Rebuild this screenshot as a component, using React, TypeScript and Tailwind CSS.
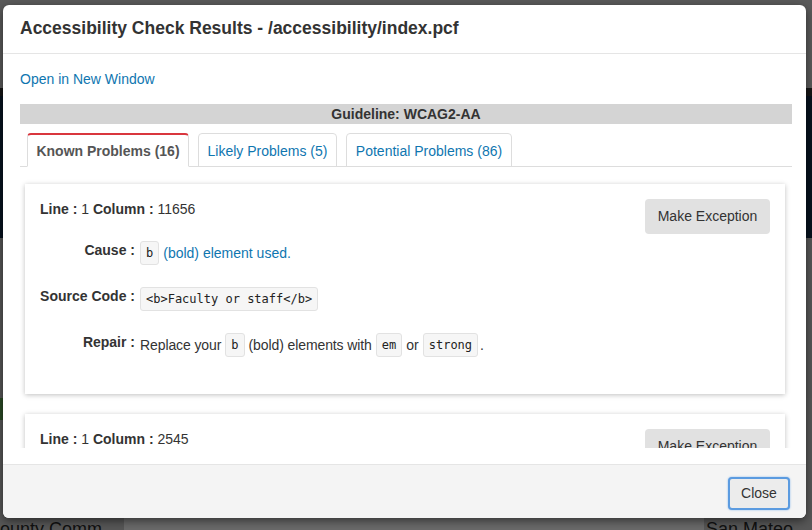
import React from 'react';

const sans = 'font-["Liberation_Sans",Arial,sans-serif]';
const mono = 'font-["DejaVu_Sans_Mono",monospace]';

const Code: React.FC<{ children: React.ReactNode }> = ({ children }) => (
  <code className={`${mono} inline-block text-[12px] leading-[22px] text-[#222] bg-[#f6f6f6] border border-[#e2e2e2] rounded-[3px] px-[5px]`}>
    {children}
  </code>
);

interface RowProps {
  label: string;
  children: React.ReactNode;
}

const Row: React.FC<RowProps> = ({ label, children }) => (
  <div className="flex items-center mt-[22px] min-h-[24px]">
    <span className="w-[95px] text-right font-bold text-[#333] mr-[5px] -mt-[5px]">{label}</span>
    <div className="flex items-center gap-[4px] text-[#333]">{children}</div>
  </div>
);

interface IssueProps {
  line: number;
  column: number;
}

const Issue: React.FC<IssueProps> = ({ line, column }) => (
  <div className="bg-white ml-[5px] mr-[7px] shadow-[0_1px_5px_rgba(0,0,0,0.25)] flex justify-between px-[15px] pt-[15px] pb-[37px]">
    <div>
      <div className="h-[20px] leading-[20px] text-[#333]">
        <b>Line : </b>{line} <b>Column : </b>{column}
      </div>
      <Row label="Cause :">
        <Code>b</Code>
        <span className="text-[#0f76b0]">(bold) element used.</span>
      </Row>
      <Row label="Source Code :">
        <Code>&lt;b&gt;Faculty or staff&lt;/b&gt;</Code>
      </Row>
      <Row label="Repair :">
        <span className="tracking-[-0.1px]">Replace your</span>
        <Code>b</Code>
        <span className="tracking-[-0.1px]">(bold) elements with</span>
        <Code>em</Code>
        <span>or</span>
        <Code>strong</Code>
        <span className="-ml-[2px]">.</span>
      </Row>
    </div>
    <button className="h-[35px] w-[125px] bg-[#e1e1e1] rounded-[4px] text-[#333] text-[14px]">
      Make Exception
    </button>
  </div>
);

const tabs = [
  { label: 'Known Problems (16)', w: 'w-[162px]', active: true },
  { label: 'Likely Problems (5)', w: 'w-[139px]', active: false },
  { label: 'Potential Problems (86)', w: 'w-[166px]', active: false },
];

export default function App() {
  return (
    <div className={`${sans} relative w-[812px] h-[530px] overflow-hidden bg-[#585858] text-[14px]`}>
      {/* dimmed page behind the dialog */}
      <div className="flex flex-col h-full">
        <div className="h-[88px] bg-[#5a5a5a]" />
        <div className="h-[8px] bg-[#161616]" />
        <div className="h-[142px] bg-[#07121e]" />
        <div className="h-[160px] bg-[#575757]" />
        <div className="h-[22px] w-[120px] bg-[#2b4a25]" />
        <div className="flex-1 bg-[#575757]" />
        <div className="h-[12px] flex text-[18px] leading-[22px] text-[#111] overflow-hidden">
          <span className="w-[124px] bg-[#575757]">ounty Comm</span>
          <span className="w-[580px] bg-[#6a6a6a]" />
          <span className="flex-1 bg-[#575757] pl-[2px]">San Mateo</span>
        </div>
      </div>

      {/* dialog */}
      <div className="absolute left-[3px] top-[5px] w-[803px] h-[513px] bg-white rounded-[6px] shadow-[0_3px_10px_rgba(0,0,0,0.5)] flex flex-col overflow-hidden">
        <div className="h-[49px] border-b border-[#e5e5e5] px-[17px] flex items-center">
          <h1 className="text-[17.5px] font-bold text-[#333] mt-[-1px]">
            Accessibility Check Results - /accessibility/index.pcf
          </h1>
        </div>

        <div className="flex-1 pl-[17px] pr-[14px] pt-[15px] pb-[15px] flex flex-col min-h-0">
          <a className="h-[20px] leading-[20px] text-[#0f76b0]">Open in New Window</a>
          <div className="mt-[15px] h-[20px] leading-[20px] bg-[#d4d4d4] text-center font-bold text-[#333]">
            Guideline: WCAG2-AA
          </div>
          <div className="mt-[9px] flex gap-[9px] pl-[7px] border-b border-[#dddddd]">
            {tabs.map((t) => (
              <div
                key={t.label}
                className={`${t.w} h-[34px] -mb-px flex items-center justify-center pt-[2px] rounded-t-[4px] border ${
                  t.active
                    ? 'border-[#ddd] border-b-white border-t-2 border-t-[#d9363e] font-bold text-[#555] bg-white'
                    : 'border-[#ddd] text-[#0f76b0]'
                }`}
              >
                {t.label}
              </div>
            ))}
          </div>
          <div className="h-[281px] overflow-hidden pt-[17px] flex flex-col gap-[20px]">
            <Issue line={1} column={11656} />
            <Issue line={1} column={2545} />
          </div>
        </div>

        <div className="h-[54px] border-t border-[#e5e5e5] bg-[#f4f4f4] flex items-center justify-end pr-[16px]">
          <button className="w-[62px] h-[33px] rounded-[4px] bg-[#ececec] border-2 border-[#5b9be0] shadow-[0_0_2px_#7fb2ea] text-[#333] text-[14px] mt-[4px]">
            Close
          </button>
        </div>
      </div>
    </div>
  );
}
